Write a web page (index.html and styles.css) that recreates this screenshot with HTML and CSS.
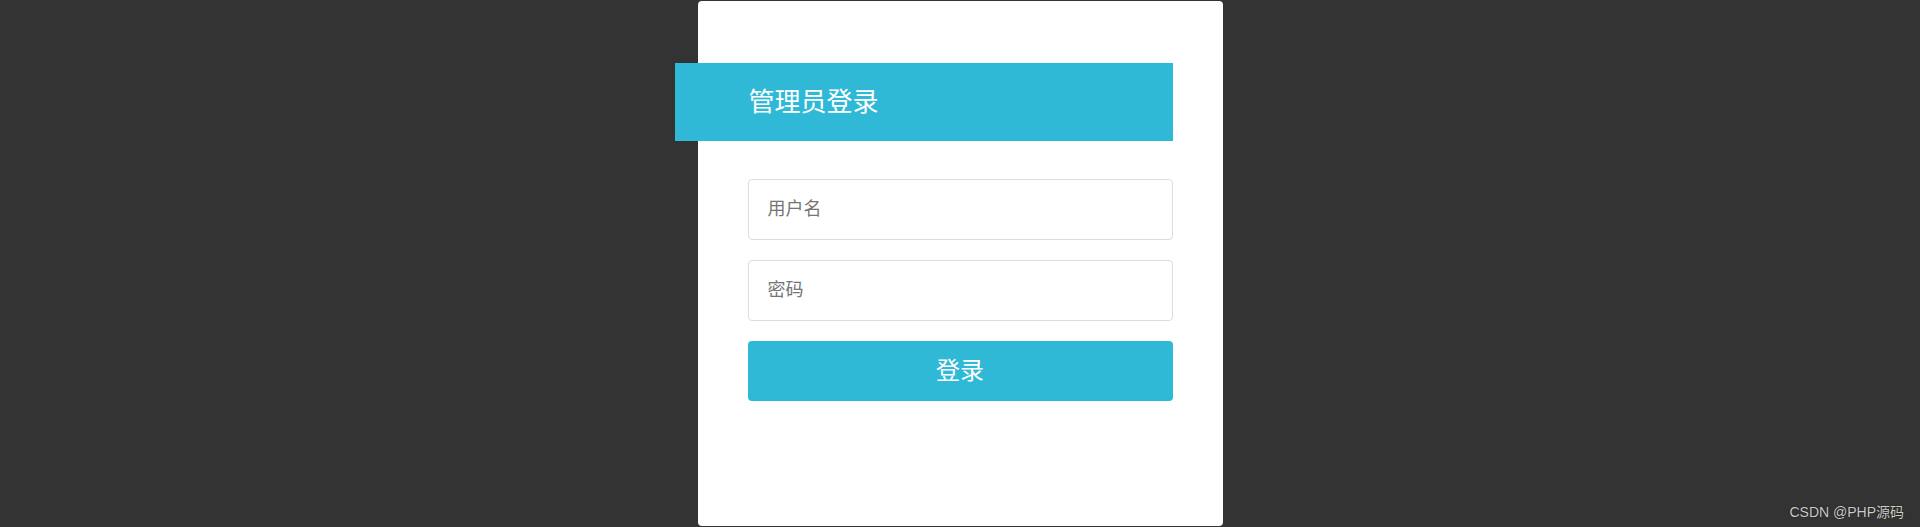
FILE: index.html
```html
<!DOCTYPE html>
<html>
	<head>
		<meta charset="utf-8">
		<title>管理员登录</title>
		<link rel="stylesheet" href="styles.css">
	</head>
	<body>
		<div class="login-box">
			<div class="login-title">管理员登录</div>
			<form class="login-form">
				<input type="text" class="user-in" placeholder="用户名">
				<input type="password" class="user-in" placeholder="密码">
				<button type="button" class="login-btn">登录</button>
			</form>
		</div>
		<div class="mark">CSDN @PHP源码</div>
	</body>
</html>
```

FILE: styles.css
```css
html,body{
	margin: 0;
	height: 100%;
}
body{
	background: #333;
	display: flex;
	justify-content: center;
	align-items: center;
	font-family: "Liberation Sans", "Noto Sans CJK SC", sans-serif;
}
.login-box{
	background: #fff;
	width: 525px;
	height: 525px;
	border-radius: 4px;
	box-sizing: border-box;
	padding: 62px 50px 0 50px;
}
.login-title{
	background: #30b9d6;
	color: #fff;
	height: 78px;
	line-height: 78px;
	margin-left: -73px;
	padding-left: 74px;
	font-size: 26px;
}
.login-form{
	margin-top: 38px;
	display: flex;
	flex-direction: column;
	gap: 20px;
}
.user-in{
	height: 61px;
	box-sizing: border-box;
	border: 1px solid #ddd;
	border-radius: 4px;
	padding: 0 19px;
	font-size: 18px;
	font-family: "Liberation Sans", "Noto Sans CJK SC", sans-serif;
	outline: none;
}
.user-in::placeholder{
	color: #757575;
}
.login-btn{
	height: 60px;
	background: #30b9d6;
	color: #fff;
	border: none;
	border-radius: 4px;
	font-size: 24px;
	font-family: "Liberation Sans", "Noto Sans CJK SC", sans-serif;
	padding: 0 0 6px 0;
}
.mark{
	position: absolute;
	right: 16px;
	bottom: 6px;
	color: #ccc;
	font-size: 14px;
	text-shadow: 0 0 1px #000;
}
```
